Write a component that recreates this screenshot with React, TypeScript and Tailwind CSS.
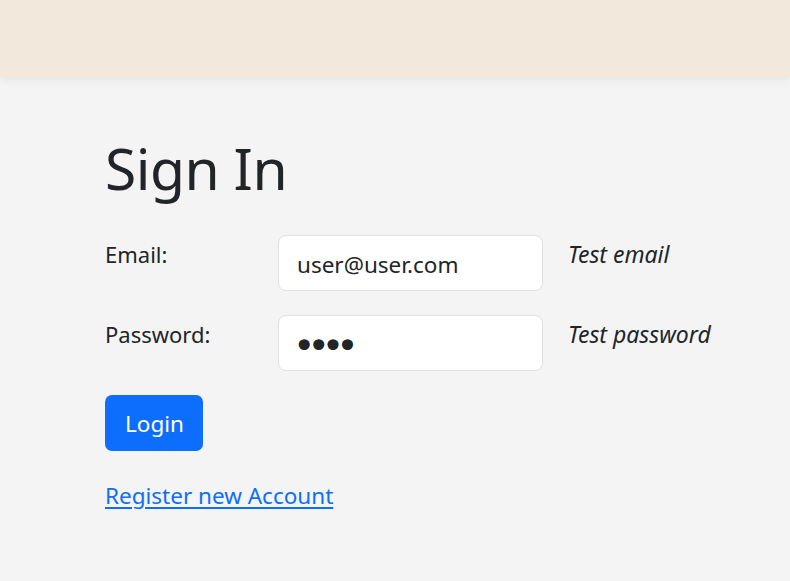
import React from "react";

export default function App() {
  const font = { fontFamily: '"Noto Sans", "Open Sans", sans-serif' };
  return (
    <div className="min-h-[581px] bg-[#f4f4f4] text-[#212529]" style={font}>
      <header className="h-[77px] bg-[#f2e8dc] shadow-[0_2px_10px_rgba(0,0,0,0.08)] relative z-10" />
      <main className="pl-[105px] pt-[55px]">
        <h1 className="text-[57px] leading-[72px] font-normal tracking-[-0.5px]">Sign In</h1>
        <form className="mt-[31px] flex flex-col gap-[24px]" onSubmit={(e) => e.preventDefault()}>
          <div className="flex items-start">
            <label className="w-[173px] text-[22px] leading-[30px] pt-[4px]">Email:</label>
            <input
              type="email"
              defaultValue="user@user.com"
              className="w-[265px] h-[56px] rounded-[8px] border border-[#dee2e6] bg-white px-[18px] pt-[2px] text-[22.5px] text-[#212529] outline-none"
              style={font}
            />
            <span className="ml-[25px] text-[23px] leading-[30px] italic pt-[4px]">Test email</span>
          </div>
          <div className="flex items-start">
            <label className="w-[173px] text-[22px] leading-[30px] pt-[4px]">Password:</label>
            <input
              type="password"
              defaultValue="user"
              className="w-[265px] h-[56px] rounded-[8px] border border-[#dee2e6] bg-white pl-[14px] pr-[18px] pt-[6px] text-[38px] tracking-[-8px] text-[#212529] outline-none"
              style={{ fontFamily: '"DejaVu Sans", sans-serif' }}
            />
            <span className="ml-[25px] text-[23px] leading-[30px] italic pt-[4px]">Test password</span>
          </div>
          <div>
            <button
              type="submit"
              className="h-[56px] pl-[20px] pr-[19px] pt-[2px] rounded-[7px] bg-[#0d6efd] text-white text-[22.5px]"
              style={font}
            >
              Login
            </button>
          </div>
        </form>
        <a href="#" className="mt-[30px] inline-block text-[22.5px] leading-[30px] text-[#0d6efd] underline underline-offset-[3px]">
          Register new Account
        </a>
      </main>
    </div>
  );
}
